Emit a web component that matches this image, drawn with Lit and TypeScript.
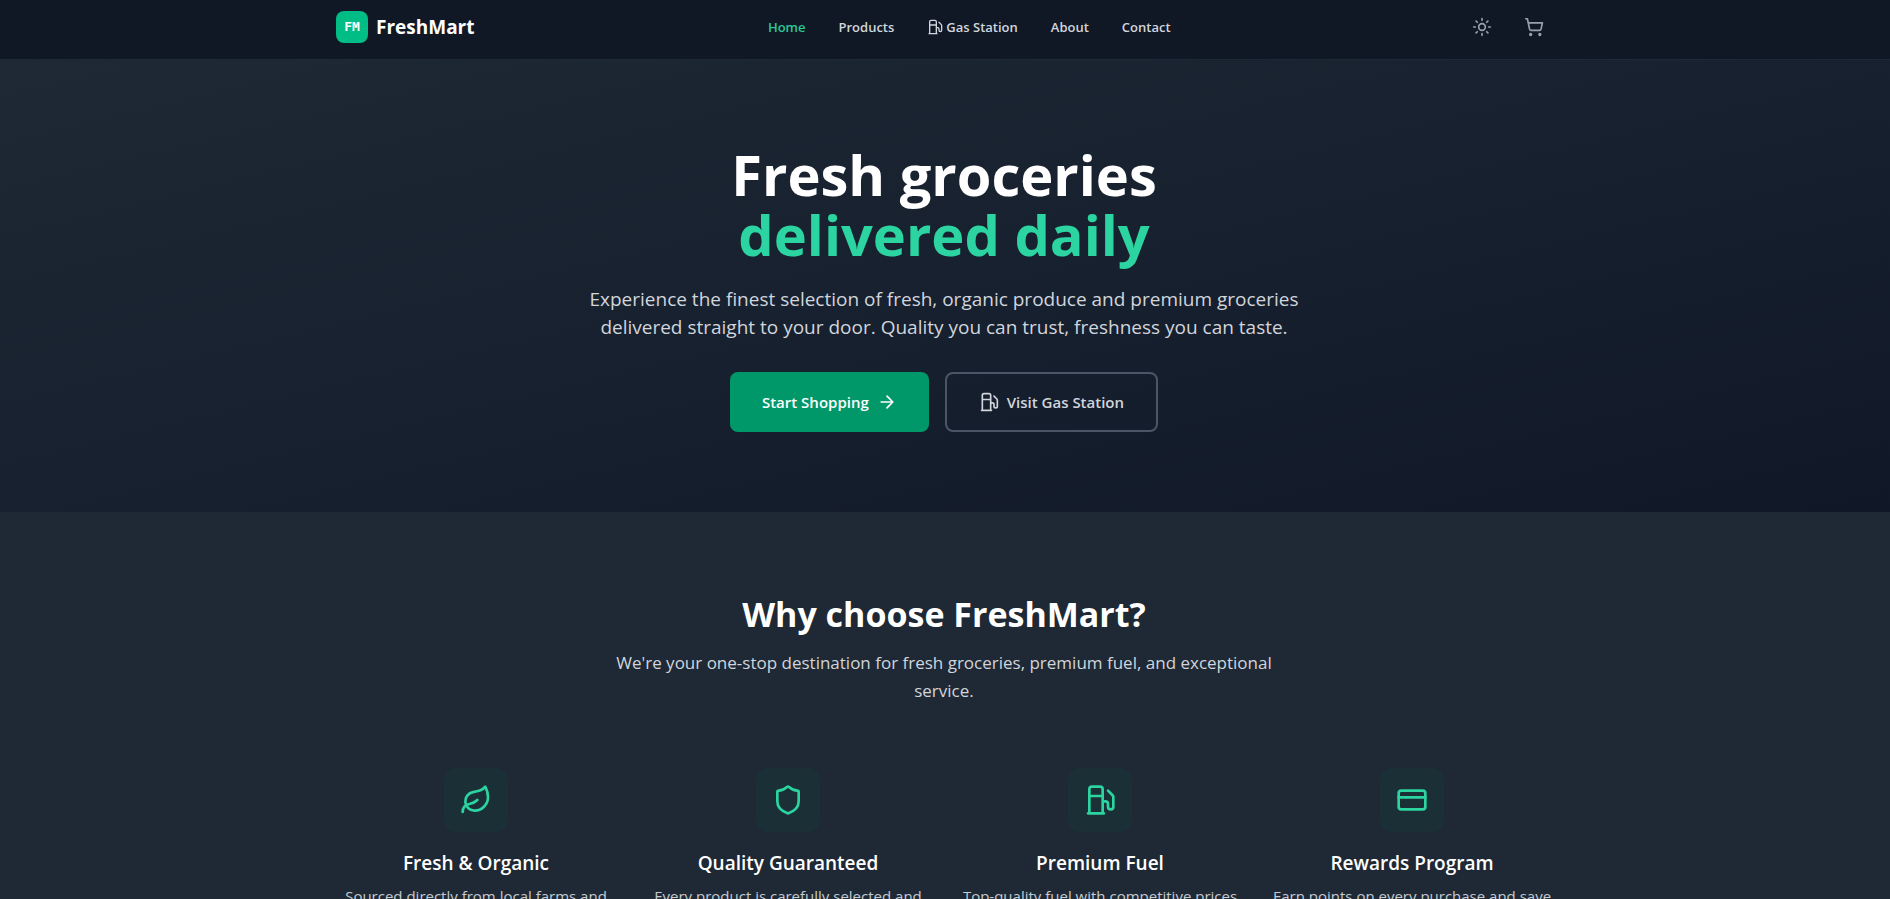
import { LitElement, html, css, svg } from "lit";
import { customElement } from "lit/decorators.js";

const icon = (body: unknown, cls: string) => html`<svg class="icon ${cls}" viewBox="0 0 24 24" aria-hidden="true">${body}</svg>`;

const fuel = svg`<path d="M3 22h12M4 9h10M14 22V4a2 2 0 0 0-2-2H6a2 2 0 0 0-2 2v18M14 13h2a2 2 0 0 1 2 2v2a2 2 0 0 0 2 2 2 2 0 0 0 2-2V9.83a2 2 0 0 0-.59-1.42L18 5"/>`;
const sun = svg`<circle cx="12" cy="12" r="4"/><path d="M12 2v2M12 20v2M4.93 4.93l1.41 1.41M17.66 17.66l1.41 1.41M2 12h2M20 12h2M6.34 17.66l-1.41 1.41M19.07 4.93l-1.41 1.41"/>`;
const cart = svg`<circle cx="8" cy="21" r="1"/><circle cx="19" cy="21" r="1"/><path d="M2.05 2.05h2l2.66 12.42a2 2 0 0 0 2 1.58h9.78a2 2 0 0 0 1.95-1.57l1.65-7.43H5.12"/>`;
const arrow = svg`<path d="M5 12h14M12 5l7 7-7 7"/>`;
const leaf = svg`<path d="M11 20A7 7 0 0 1 9.8 6.1C15.5 5 17 4.48 19 2c1 2 2 4.18 2 8 0 5.5-4.78 10-10 10Z"/><path d="M2 21c0-3 1.85-5.36 5.08-6C9.5 14.52 12 13 13 12"/>`;
const shield = svg`<path d="M20 13c0 5-3.5 7.5-7.66 8.95a1 1 0 0 1-.67-.01C7.5 20.5 4 18 4 13V6a1 1 0 0 1 1-1c2 0 4.5-1.2 6.24-2.72a1.17 1.17 0 0 1 1.52 0C14.51 3.81 17 5 19 5a1 1 0 0 1 1 1z"/>`;
const card = svg`<rect x="2" y="5" width="20" height="14" rx="2"/><path d="M2 10h20"/>`;

const features = [
  { icon: leaf, title: "Fresh & Organic", text: "Sourced directly from local farms and" },
  { icon: shield, title: "Quality Guaranteed", text: "Every product is carefully selected and" },
  { icon: fuel, title: "Premium Fuel", text: "Top-quality fuel with competitive prices" },
  { icon: card, title: "Rewards Program", text: "Earn points on every purchase and save" },
];

@customElement("app-root")
export class AppRoot extends LitElement {
  static styles = css`
    :host {
      display: block;
      height: 100vh;
      overflow: hidden;
      background: #1e2935;
      color: #fff;
      font-family: "Segoe UI", "Open Sans", "Noto Sans", sans-serif;
      font-size: 16px;
      line-height: 24px;
    }
    *, *::before, *::after { box-sizing: border-box; }
    h1, h2, h3, p { margin: 0; }
    a { color: inherit; text-decoration: none; }
    .header, .hero, .why { padding-right: 2px; }
    .icon { display: block; flex: none; fill: none; stroke: currentColor; stroke-width: 2; stroke-linecap: round; stroke-linejoin: round; }
    .small { width: 16px; height: 16px; }
    .medium { width: 20px; height: 20px; }
    .large { width: 32px; height: 32px; }
    .header { background: #101826; border-bottom: 1px solid #1e2937; }
    .bar {
      display: flex; align-items: center; justify-content: space-between;
      max-width: 1280px; margin: 0 auto; padding: 9px 32px 14px;
    }
    .brand { display: flex; align-items: center; gap: 8px; font-size: 19px; line-height: 28px; font-weight: 700; }
    .mark {
      display: grid; place-items: center; width: 32px; height: 32px; border-radius: 8px;
      background: #00bc85; font: 700 13px/16px "DejaVu Sans Mono", monospace;
    }
    .links { display: flex; gap: 33px; color: #d1d5dc; font-size: 13px; line-height: 20px; font-weight: 600; }
    .links a { display: flex; align-items: center; gap: 3px; }
    .links .active { color: #2bc796; }
    .tools { display: flex; gap: 16px; color: #99a1af; }
    .tools button { display: block; padding: 8px; border: 0; background: none; color: inherit; }
    .hero { background: linear-gradient(to bottom right, #1e2935, #101828); text-align: center; }
    .pitch { padding: 84px 32px 80px; }
    h1 { font-size: 56px; line-height: 60px; font-weight: 700; }
    h1 span { display: block; color: #2bd4a0; }
    .lead { max-width: 768px; margin: 21px auto 31px; color: #d1d5dc; font-size: 19px; line-height: 28px; }
    .actions { display: flex; justify-content: center; gap: 16px; }
    .action {
      display: flex; align-items: center; gap: 8px; padding: 16px 32px; border: 2px solid #4a5565;
      border-radius: 8px; color: #d1d5dc; font-size: 15px; line-height: 24px; font-weight: 600;
    }
    .primary { background: #009869; border-width: 2px 0; border-color: #009869; color: #fff; }
    .reasons { padding: 82px 32px 80px; max-width: 1280px; margin: 0 auto; text-align: center; }
    h2 { font-size: 34px; line-height: 40px; font-weight: 700; }
    .intro { max-width: 672px; margin: 15px auto 63px; color: #d1d5dc; font-size: 17px; line-height: 28px; }
    .grid { display: grid; grid-template-columns: repeat(4, 1fr); gap: 32px; }
    .feature { display: flex; flex-direction: column; align-items: center; white-space: nowrap; }
    .tile { display: grid; place-items: center; width: 64px; height: 64px; border-radius: 12px; background: #1a3036; color: #2bd4a0; }
    h3 { margin: 17px 0 7px; font-size: 19px; line-height: 28px; font-weight: 600; }
    .feature p { color: #c5cad2; font-size: 15px; line-height: 24px; }
  `;

  render() {
    return html`
      <header class="header">
        <div class="bar">
          <a class="brand" href="#"><span class="mark">FM</span>FreshMart</a>
          <nav class="links">
            <a class="active" href="#">Home</a>
            <a href="#products">Products</a>
            <a href="#gas">${icon(fuel, "small")}Gas Station</a>
            <a href="#about">About</a>
            <a href="#contact">Contact</a>
          </nav>
          <div class="tools">
            <button type="button" aria-label="Toggle theme">${icon(sun, "medium")}</button>
            <button type="button" aria-label="Cart">${icon(cart, "medium")}</button>
          </div>
        </div>
      </header>
      <section class="hero">
        <div class="pitch">
          <h1>Fresh groceries <span>delivered daily</span></h1>
          <p class="lead">Experience the finest selection of fresh, organic produce and premium groceries delivered straight to your door. Quality you can trust, freshness you can taste.</p>
          <div class="actions">
            <a class="action primary" href="#products">Start Shopping ${icon(arrow, "medium")}</a>
            <a class="action" href="#gas">${icon(fuel, "medium")} Visit Gas Station</a>
          </div>
        </div>
      </section>
      <section class="why">
        <div class="reasons">
          <h2>Why choose FreshMart?</h2>
          <p class="intro">We're your one-stop destination for fresh groceries, premium fuel, and exceptional service.</p>
          <div class="grid">
            ${features.map((f) => html`<article class="feature">
              <div class="tile">${icon(f.icon, "large")}</div>
              <h3>${f.title}</h3>
              <p>${f.text}</p>
            </article>`)}
          </div>
        </div>
      </section>`;
  }
}
